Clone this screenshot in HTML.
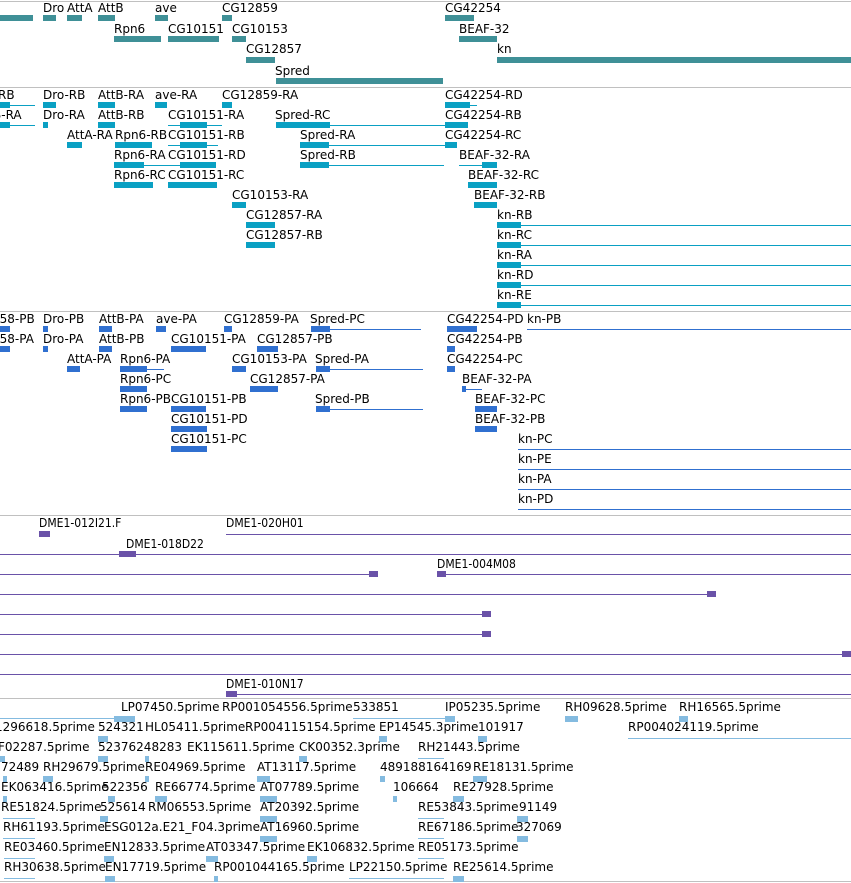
<!DOCTYPE html>
<html><head><meta charset="utf-8"><style>
html,body{margin:0;padding:0;background:#fff;width:851px;height:883px;overflow:hidden;position:relative}
.t{position:absolute;font:12px "DejaVu Sans","Liberation Sans",sans-serif;line-height:14px;white-space:pre;color:#000}
.c{font-family:"DejaVu Sans Condensed","DejaVu Sans",sans-serif;font-stretch:condensed;font-size:12px}
.s{position:absolute;left:0;width:851px;height:1px;background:#c0c0c0}
.b{position:absolute;height:6px}
.l{position:absolute;height:1px}
.T{background:#3f9097}.C{background:#0aa0c3}.B{background:#3070d0}.P{background:#6a52a8}.L{background:#84bbe0}
</style></head><body>
<div class="s" style="top:1px"></div>
<div class="s" style="top:87px"></div>
<div class="s" style="top:311px"></div>
<div class="s" style="top:515px"></div>
<div class="s" style="top:698px"></div>
<div class="s" style="top:881px"></div>

<!-- Track 1 teal -->
<span class="t" style="left:43px;top:1px">Dro</span><span class="t" style="left:67px;top:1px">AttA</span><span class="t" style="left:98px;top:1px">AttB</span><span class="t" style="left:155px;top:1px">ave</span><span class="t" style="left:222px;top:1px">CG12859</span><span class="t" style="left:445px;top:1px">CG42254</span>
<div class="b T" style="left:0;width:33px;top:15px"></div><div class="b T" style="left:43px;width:13px;top:15px"></div><div class="b T" style="left:67px;width:15px;top:15px"></div><div class="b T" style="left:98px;width:17px;top:15px"></div><div class="b T" style="left:155px;width:13px;top:15px"></div><div class="b T" style="left:222px;width:10px;top:15px"></div><div class="b T" style="left:445px;width:29px;top:15px"></div>
<span class="t" style="left:114px;top:22px">Rpn6</span><span class="t" style="left:168px;top:22px">CG10151</span><span class="t" style="left:232px;top:22px">CG10153</span><span class="t" style="left:459px;top:22px">BEAF-32</span>
<div class="b T" style="left:114px;width:47px;top:36px"></div><div class="b T" style="left:168px;width:51px;top:36px"></div><div class="b T" style="left:232px;width:14px;top:36px"></div><div class="b T" style="left:459px;width:38px;top:36px"></div>
<span class="t" style="left:246px;top:42px">CG12857</span><span class="t" style="left:497px;top:42px">kn</span>
<div class="b T" style="left:246px;width:29px;top:57px"></div><div class="b T" style="left:497px;width:354px;top:57px"></div>
<span class="t" style="left:275px;top:64px">Spred</span>
<div class="b T" style="left:276px;width:167px;top:78px"></div>

<!-- Track 2 cyan -->
<span class="t" style="left:-2px;top:88px">RB</span><span class="t" style="left:43px;top:88px">Dro-RB</span><span class="t" style="left:98px;top:88px">AttB-RA</span><span class="t" style="left:155px;top:88px">ave-RA</span><span class="t" style="left:222px;top:88px">CG12859-RA</span><span class="t" style="left:445px;top:88px">CG42254-RD</span>
<div class="b C" style="left:0;width:10px;top:102px"></div><div class="l C" style="left:0;width:35px;top:105px"></div><div class="b C" style="left:43px;width:13px;top:102px"></div><div class="b C" style="left:98px;width:17px;top:102px"></div><div class="b C" style="left:155px;width:12px;top:102px"></div><div class="b C" style="left:222px;width:10px;top:102px"></div><div class="b C" style="left:445px;width:25px;top:102px"></div><div class="l C" style="left:445px;width:32px;top:105px"></div>
<span class="t" style="left:-7px;top:108px">B-RA</span><span class="t" style="left:43px;top:108px">Dro-RA</span><span class="t" style="left:98px;top:108px">AttB-RB</span><span class="t" style="left:168px;top:108px">CG10151-RA</span><span class="t" style="left:275px;top:108px">Spred-RC</span><span class="t" style="left:445px;top:108px">CG42254-RB</span>
<div class="b C" style="left:0;width:10px;top:122px"></div><div class="l C" style="left:0;width:35px;top:125px"></div><div class="b C" style="left:43px;width:5px;top:122px"></div><div class="b C" style="left:98px;width:17px;top:122px"></div><div class="b C" style="left:180px;width:27px;top:122px"></div><div class="l C" style="left:168px;width:54px;top:125px"></div><div class="b C" style="left:276px;width:54px;top:122px"></div><div class="l C" style="left:276px;width:167px;top:125px"></div><div class="b C" style="left:445px;width:23px;top:122px"></div><div class="l C" style="left:430px;width:38px;top:125px"></div>
<span class="t" style="left:67px;top:128px">AttA-RA</span><span class="t" style="left:115px;top:128px">Rpn6-RB</span><span class="t" style="left:168px;top:128px">CG10151-RB</span><span class="t" style="left:300px;top:128px">Spred-RA</span><span class="t" style="left:445px;top:128px">CG42254-RC</span>
<div class="b C" style="left:67px;width:15px;top:142px"></div><div class="b C" style="left:115px;width:37px;top:142px"></div><div class="b C" style="left:180px;width:27px;top:142px"></div><div class="l C" style="left:168px;width:50px;top:145px"></div><div class="b C" style="left:300px;width:29px;top:142px"></div><div class="l C" style="left:300px;width:143px;top:145px"></div><div class="b C" style="left:445px;width:12px;top:142px"></div><div class="l C" style="left:430px;width:27px;top:145px"></div>
<span class="t" style="left:114px;top:148px">Rpn6-RA</span><span class="t" style="left:168px;top:148px">CG10151-RD</span><span class="t" style="left:300px;top:148px">Spred-RB</span><span class="t" style="left:459px;top:148px">BEAF-32-RA</span>
<div class="b C" style="left:114px;width:30px;top:162px"></div><div class="l C" style="left:114px;width:54px;top:165px"></div><div class="b C" style="left:180px;width:36px;top:162px"></div><div class="l C" style="left:168px;width:48px;top:165px"></div><div class="b C" style="left:300px;width:29px;top:162px"></div><div class="l C" style="left:300px;width:143px;top:165px"></div><div class="l C" style="left:430px;width:14px;top:165px"></div><div class="l C" style="left:459px;width:38px;top:165px"></div><div class="b C" style="left:482px;width:15px;top:162px"></div>
<span class="t" style="left:114px;top:168px">Rpn6-RC</span><span class="t" style="left:168px;top:168px">CG10151-RC</span><span class="t" style="left:468px;top:168px">BEAF-32-RC</span>
<div class="b C" style="left:114px;width:39px;top:182px"></div><div class="b C" style="left:168px;width:49px;top:182px"></div><div class="b C" style="left:468px;width:29px;top:182px"></div>
<span class="t" style="left:232px;top:188px">CG10153-RA</span><span class="t" style="left:474px;top:188px">BEAF-32-RB</span>
<div class="b C" style="left:232px;width:14px;top:202px"></div><div class="b C" style="left:474px;width:23px;top:202px"></div>
<span class="t" style="left:246px;top:208px">CG12857-RA</span><span class="t" style="left:497px;top:208px">kn-RB</span>
<div class="b C" style="left:246px;width:29px;top:222px"></div><div class="b C" style="left:497px;width:24px;top:222px"></div><div class="l C" style="left:497px;width:354px;top:225px"></div>
<span class="t" style="left:246px;top:228px">CG12857-RB</span><span class="t" style="left:497px;top:228px">kn-RC</span>
<div class="b C" style="left:246px;width:29px;top:242px"></div><div class="b C" style="left:497px;width:24px;top:242px"></div><div class="l C" style="left:497px;width:354px;top:245px"></div>
<span class="t" style="left:497px;top:248px">kn-RA</span>
<div class="b C" style="left:497px;width:24px;top:262px"></div><div class="l C" style="left:497px;width:354px;top:265px"></div>
<span class="t" style="left:497px;top:268px">kn-RD</span>
<div class="b C" style="left:497px;width:24px;top:282px"></div><div class="l C" style="left:497px;width:354px;top:285px"></div>
<span class="t" style="left:497px;top:288px">kn-RE</span>
<div class="b C" style="left:497px;width:24px;top:302px"></div><div class="l C" style="left:497px;width:354px;top:305px"></div>

<!-- Track 3 blue -->
<span class="t" style="left:-8px;top:312px">858-PB</span><span class="t" style="left:43px;top:312px">Dro-PB</span><span class="t" style="left:99px;top:312px">AttB-PA</span><span class="t" style="left:156px;top:312px">ave-PA</span><span class="t" style="left:224px;top:312px">CG12859-PA</span><span class="t" style="left:310px;top:312px">Spred-PC</span><span class="t" style="left:447px;top:312px">CG42254-PD</span><span class="t" style="left:527px;top:312px">kn-PB</span>
<div class="b B" style="left:0;width:10px;top:326px"></div><div class="b B" style="left:43px;width:5px;top:326px"></div><div class="b B" style="left:99px;width:13px;top:326px"></div><div class="b B" style="left:156px;width:10px;top:326px"></div><div class="b B" style="left:224px;width:8px;top:326px"></div><div class="b B" style="left:311px;width:19px;top:326px"></div><div class="l B" style="left:311px;width:110px;top:329px"></div><div class="b B" style="left:447px;width:30px;top:326px"></div><div class="l B" style="left:527px;width:324px;top:329px"></div>
<span class="t" style="left:-8px;top:332px">858-PA</span><span class="t" style="left:43px;top:332px">Dro-PA</span><span class="t" style="left:99px;top:332px">AttB-PB</span><span class="t" style="left:171px;top:332px">CG10151-PA</span><span class="t" style="left:257px;top:332px">CG12857-PB</span><span class="t" style="left:447px;top:332px">CG42254-PB</span>
<div class="b B" style="left:0;width:10px;top:346px"></div><div class="b B" style="left:43px;width:5px;top:346px"></div><div class="b B" style="left:99px;width:13px;top:346px"></div><div class="b B" style="left:171px;width:35px;top:346px"></div><div class="b B" style="left:257px;width:21px;top:346px"></div><div class="b B" style="left:447px;width:8px;top:346px"></div>
<span class="t" style="left:67px;top:352px">AttA-PA</span><span class="t" style="left:120px;top:352px">Rpn6-PA</span><span class="t" style="left:232px;top:352px">CG10153-PA</span><span class="t" style="left:315px;top:352px">Spred-PA</span><span class="t" style="left:447px;top:352px">CG42254-PC</span>
<div class="b B" style="left:67px;width:13px;top:366px"></div><div class="b B" style="left:120px;width:27px;top:366px"></div><div class="l B" style="left:120px;width:44px;top:369px"></div><div class="b B" style="left:232px;width:14px;top:366px"></div><div class="b B" style="left:316px;width:14px;top:366px"></div><div class="l B" style="left:316px;width:107px;top:369px"></div><div class="b B" style="left:447px;width:8px;top:366px"></div>
<span class="t" style="left:120px;top:372px">Rpn6-PC</span><span class="t" style="left:250px;top:372px">CG12857-PA</span><span class="t" style="left:462px;top:372px">BEAF-32-PA</span>
<div class="b B" style="left:120px;width:27px;top:386px"></div><div class="b B" style="left:250px;width:28px;top:386px"></div><div class="l B" style="left:462px;width:20px;top:389px"></div><div class="b B" style="left:462px;width:4px;top:386px"></div>
<span class="t" style="left:120px;top:392px">Rpn6-PB</span><span class="t" style="left:171px;top:392px">CG10151-PB</span><span class="t" style="left:315px;top:392px">Spred-PB</span><span class="t" style="left:475px;top:392px">BEAF-32-PC</span>
<div class="b B" style="left:120px;width:27px;top:406px"></div><div class="b B" style="left:171px;width:35px;top:406px"></div><div class="b B" style="left:316px;width:14px;top:406px"></div><div class="l B" style="left:316px;width:107px;top:409px"></div><div class="b B" style="left:475px;width:22px;top:406px"></div>
<span class="t" style="left:171px;top:412px">CG10151-PD</span><span class="t" style="left:475px;top:412px">BEAF-32-PB</span>
<div class="b B" style="left:171px;width:36px;top:426px"></div><div class="b B" style="left:475px;width:22px;top:426px"></div>
<span class="t" style="left:171px;top:432px">CG10151-PC</span><span class="t" style="left:518px;top:432px">kn-PC</span>
<div class="b B" style="left:171px;width:36px;top:446px"></div><div class="l B" style="left:518px;width:333px;top:449px"></div>
<span class="t" style="left:518px;top:452px">kn-PE</span>
<div class="l B" style="left:518px;width:333px;top:469px"></div>
<span class="t" style="left:518px;top:472px">kn-PA</span>
<div class="l B" style="left:518px;width:333px;top:489px"></div>
<span class="t" style="left:518px;top:492px">kn-PD</span>
<div class="l B" style="left:518px;width:333px;top:509px"></div>

<!-- Track 4 purple -->
<span class="t c" style="left:39px;top:516px">DME1-012I21.F</span><span class="t c" style="left:226px;top:516px">DME1-020H01</span>
<div class="b P" style="left:39px;width:11px;top:531px"></div><div class="l P" style="left:226px;width:625px;top:534px"></div>
<span class="t c" style="left:126px;top:537px">DME1-018D22</span>
<div class="l P" style="left:0;width:851px;top:554px"></div><div class="b P" style="left:119px;width:17px;top:551px"></div>
<span class="t c" style="left:437px;top:557px">DME1-004M08</span>
<div class="l P" style="left:0;width:378px;top:574px"></div><div class="b P" style="left:369px;width:9px;top:571px"></div><div class="l P" style="left:437px;width:414px;top:574px"></div><div class="b P" style="left:437px;width:9px;top:571px"></div>
<div class="l P" style="left:0;width:716px;top:594px"></div><div class="b P" style="left:707px;width:9px;top:591px"></div>
<div class="l P" style="left:0;width:491px;top:614px"></div><div class="b P" style="left:482px;width:9px;top:611px"></div>
<div class="l P" style="left:0;width:491px;top:634px"></div><div class="b P" style="left:482px;width:9px;top:631px"></div>
<div class="l P" style="left:0;width:851px;top:654px"></div><div class="b P" style="left:842px;width:9px;top:651px"></div>
<div class="l P" style="left:0;width:851px;top:674px"></div>
<span class="t c" style="left:226px;top:677px">DME1-010N17</span>
<div class="l P" style="left:226px;width:625px;top:694px"></div><div class="b P" style="left:226px;width:11px;top:691px"></div>

<!-- Track 5 light blue -->
<span class="t" style="left:121px;top:700px">LP07450.5prime</span><span class="t" style="left:222px;top:700px">RP001054556.5prime</span><span class="t" style="left:353px;top:700px">533851</span><span class="t" style="left:445px;top:700px">IP05235.5prime</span><span class="t" style="left:565px;top:700px">RH09628.5prime</span><span class="t" style="left:679px;top:700px">RH16565.5prime</span>
<div class="l L" style="left:0;width:125px;top:718px"></div><div class="b L" style="left:114px;width:21px;top:716px"></div><div class="l L" style="left:353px;width:102px;top:718px"></div><div class="b L" style="left:445px;width:10px;top:716px"></div><div class="b L" style="left:565px;width:13px;top:716px"></div><div class="b L" style="left:679px;width:9px;top:716px"></div>
<span class="t" style="left:-5px;top:720px">1296618.5prime</span><span class="t" style="left:98px;top:720px">524321</span><span class="t" style="left:145px;top:720px">HL05411.5prime</span><span class="t" style="left:245px;top:720px">RP004115154.5prime</span><span class="t" style="left:379px;top:720px">EP14545.3prime</span><span class="t" style="left:478px;top:720px">101917</span><span class="t" style="left:628px;top:720px">RP004024119.5prime</span>
<div class="b L" style="left:98px;width:10px;top:736px"></div><div class="b L" style="left:379px;width:8px;top:736px"></div><div class="b L" style="left:478px;width:9px;top:736px"></div><div class="l L" style="left:628px;width:223px;top:738px"></div>
<span class="t" style="left:-2px;top:740px">F02287.5prime</span><span class="t" style="left:98px;top:740px">52376248283</span><span class="t" style="left:187px;top:740px">EK115611.5prime</span><span class="t" style="left:299px;top:740px">CK00352.3prime</span><span class="t" style="left:418px;top:740px">RH21443.5prime</span>
<div class="b L" style="left:0;width:5px;top:756px"></div><div class="b L" style="left:98px;width:10px;top:756px"></div><div class="b L" style="left:145px;width:4px;top:756px"></div><div class="b L" style="left:299px;width:8px;top:756px"></div><div class="l L" style="left:418px;width:26px;top:758px"></div>
<span class="t" style="left:1px;top:760px">72489</span><span class="t" style="left:43px;top:760px">RH29679.5prime</span><span class="t" style="left:145px;top:760px">RE04969.5prime</span><span class="t" style="left:257px;top:760px">AT13117.5prime</span><span class="t" style="left:380px;top:760px">489188164169</span><span class="t" style="left:473px;top:760px">RE18131.5prime</span>
<div class="b L" style="left:3px;width:4px;top:776px"></div><div class="b L" style="left:43px;width:10px;top:776px"></div><div class="b L" style="left:145px;width:4px;top:776px"></div><div class="b L" style="left:257px;width:13px;top:776px"></div><div class="b L" style="left:380px;width:5px;top:776px"></div><div class="b L" style="left:473px;width:14px;top:776px"></div>
<span class="t" style="left:1px;top:780px">EK063416.5prime</span><span class="t" style="left:102px;top:780px">522356</span><span class="t" style="left:155px;top:780px">RE66774.5prime</span><span class="t" style="left:260px;top:780px">AT07789.5prime</span><span class="t" style="left:393px;top:780px">106664</span><span class="t" style="left:453px;top:780px">RE27928.5prime</span>
<div class="b L" style="left:3px;width:4px;top:796px"></div><div class="b L" style="left:108px;width:7px;top:796px"></div><div class="b L" style="left:155px;width:12px;top:796px"></div><div class="b L" style="left:260px;width:17px;top:796px"></div><div class="b L" style="left:393px;width:4px;top:796px"></div><div class="b L" style="left:453px;width:11px;top:796px"></div>
<span class="t" style="left:1px;top:800px">RE51824.5prime</span><span class="t" style="left:100px;top:800px">525614</span><span class="t" style="left:148px;top:800px">RM06553.5prime</span><span class="t" style="left:260px;top:800px">AT20392.5prime</span><span class="t" style="left:418px;top:800px">RE53843.5prime</span><span class="t" style="left:519px;top:800px">91149</span>
<div class="l L" style="left:3px;width:32px;top:818px"></div><div class="b L" style="left:100px;width:8px;top:816px"></div><div class="b L" style="left:260px;width:17px;top:816px"></div><div class="l L" style="left:418px;width:26px;top:818px"></div><div class="b L" style="left:517px;width:11px;top:816px"></div>
<span class="t" style="left:3px;top:820px">RH61193.5prime</span><span class="t" style="left:104px;top:820px">ESG012a.E21_F04.3prime</span><span class="t" style="left:260px;top:820px">AT16960.5prime</span><span class="t" style="left:418px;top:820px">RE67186.5prime</span><span class="t" style="left:516px;top:820px">327069</span>
<div class="l L" style="left:3px;width:32px;top:838px"></div><div class="b L" style="left:260px;width:17px;top:836px"></div><div class="l L" style="left:418px;width:26px;top:838px"></div><div class="b L" style="left:517px;width:11px;top:836px"></div>
<span class="t" style="left:4px;top:840px">RE03460.5prime</span><span class="t" style="left:104px;top:840px">EN12833.5prime</span><span class="t" style="left:206px;top:840px">AT03347.5prime</span><span class="t" style="left:307px;top:840px">EK106832.5prime</span><span class="t" style="left:418px;top:840px">RE05173.5prime</span>
<div class="l L" style="left:4px;width:31px;top:858px"></div><div class="b L" style="left:104px;width:10px;top:856px"></div><div class="b L" style="left:206px;width:12px;top:856px"></div><div class="b L" style="left:307px;width:10px;top:856px"></div><div class="l L" style="left:418px;width:26px;top:858px"></div>
<span class="t" style="left:4px;top:860px">RH30638.5prime</span><span class="t" style="left:105px;top:860px">EN17719.5prime</span><span class="t" style="left:214px;top:860px">RP001044165.5prime</span><span class="t" style="left:349px;top:860px">LP22150.5prime</span><span class="t" style="left:453px;top:860px">RE25614.5prime</span>
<div class="l L" style="left:4px;width:31px;top:878px"></div><div class="b L" style="left:105px;width:10px;top:876px"></div><div class="b L" style="left:214px;width:4px;top:876px"></div><div class="l L" style="left:349px;width:95px;top:878px"></div><div class="b L" style="left:453px;width:11px;top:876px"></div>
</body></html>
